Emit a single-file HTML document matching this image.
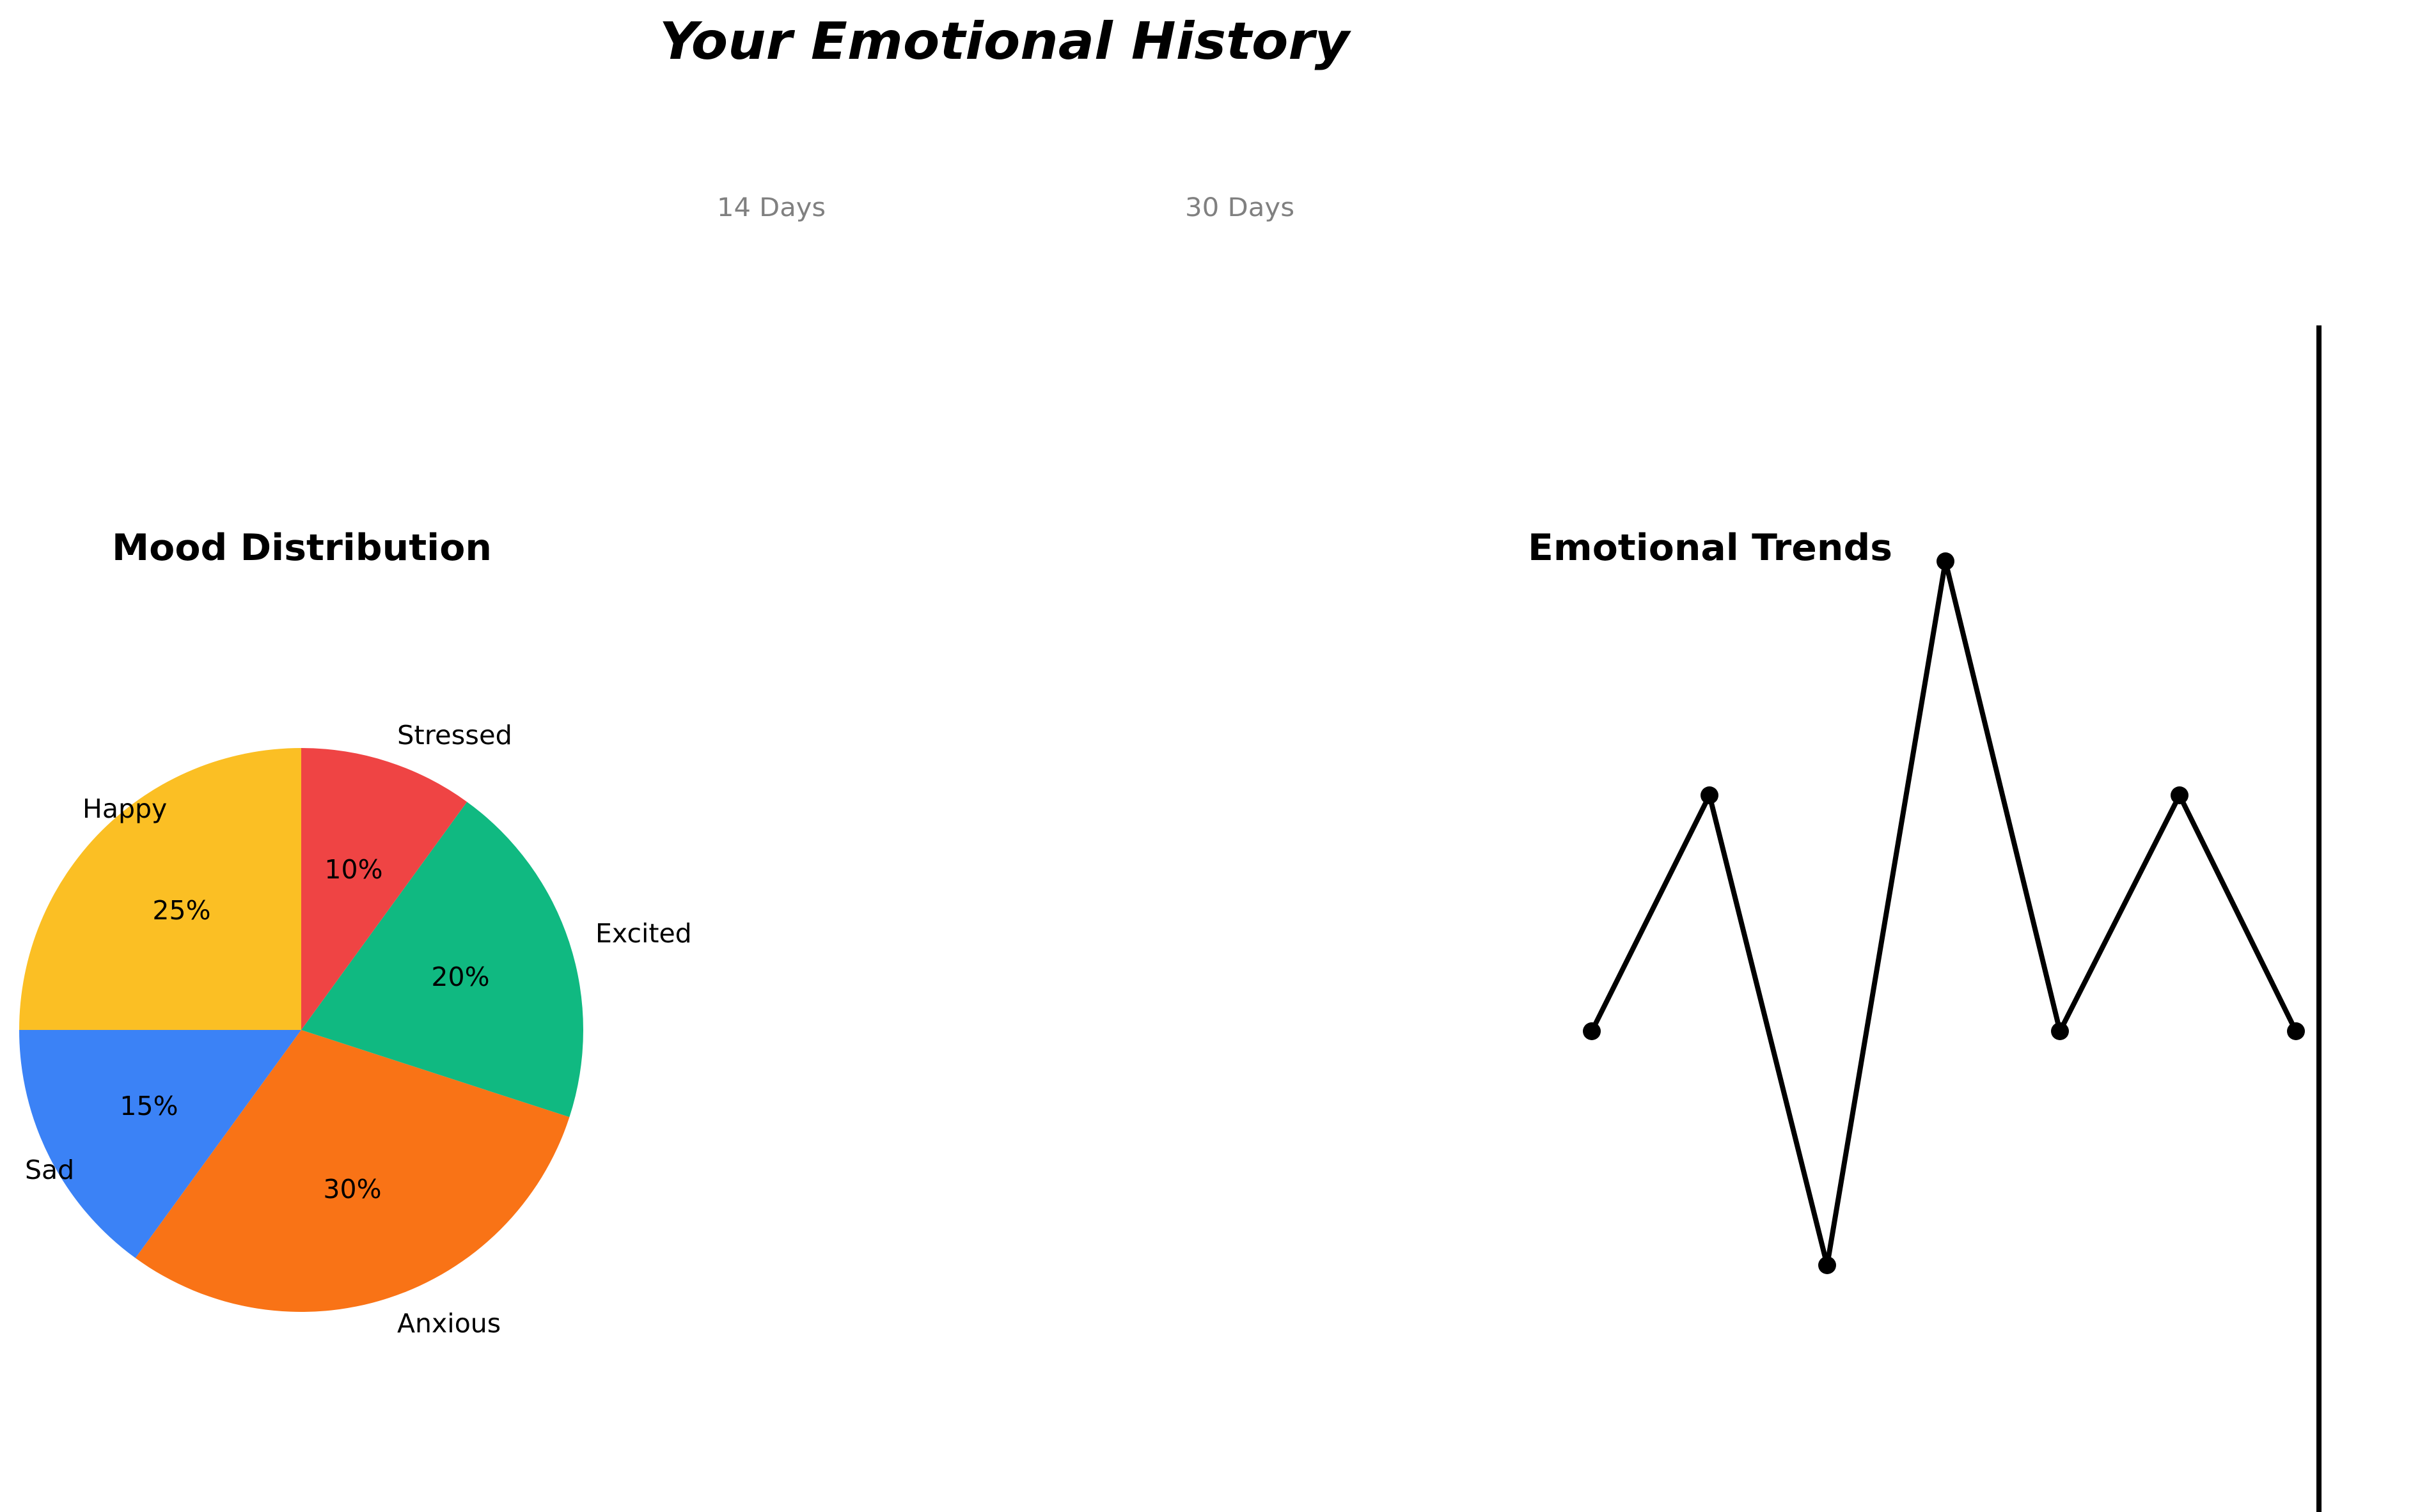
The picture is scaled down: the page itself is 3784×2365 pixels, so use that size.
<!DOCTYPE html>
<html><head><meta charset="utf-8"><style>
html,body{margin:0;padding:0;background:#fff;}
svg{display:block;}
text{font-family:"DejaVu Sans","Liberation Sans",sans-serif;}
</style></head><body>
<svg width="3784" height="2365" viewBox="0 0 3784 2365" xmlns="http://www.w3.org/2000/svg">
<rect width="3784" height="2365" fill="#fff"/>
<text x="1031" y="92" font-size="80" font-weight="bold" font-style="italic" textLength="1079" lengthAdjust="spacingAndGlyphs">Your Emotional History</text>
<text x="1121" y="338" font-size="40" fill="#808080" textLength="170" lengthAdjust="spacingAndGlyphs">14 Days</text>
<text x="1853" y="338" font-size="40" fill="#808080" textLength="171" lengthAdjust="spacingAndGlyphs">30 Days</text>
<text x="175" y="876" font-size="57" font-weight="bold" textLength="594" lengthAdjust="spacingAndGlyphs">Mood Distribution</text>
<text x="2389" y="876" font-size="57" font-weight="bold" textLength="570" lengthAdjust="spacingAndGlyphs">Emotional Trends</text>
<path d="M471,1611 L471,1170 A441,441 0 0 0 30,1611 Z" fill="#FBBF24"/>
<path d="M471,1611 L30,1611 A441,441 0 0 0 211.8,1967.8 Z" fill="#3B82F6"/>
<path d="M471,1611 L211.8,1967.8 A441,441 0 0 0 890.4,1747.3 Z" fill="#F97316"/>
<path d="M471,1611 L890.4,1747.3 A441,441 0 0 0 730.2,1254.2 Z" fill="#10B981"/>
<path d="M471,1611 L730.2,1254.2 A441,441 0 0 0 471,1170 Z" fill="#EF4444"/>
<g font-size="41">
<text x="621" y="1164" textLength="180" lengthAdjust="spacingAndGlyphs">Stressed</text>
<text x="129" y="1279">Happy</text>
<text x="931" y="1474">Excited</text>
<text x="39" y="1844">Sad</text>
<text x="621" y="2084">Anxious</text>
<g text-anchor="middle">
<text x="553" y="1374">10%</text>
<text x="284" y="1438">25%</text>
<text x="720" y="1542">20%</text>
<text x="233" y="1744">15%</text>
<text x="551" y="1874">30%</text>
</g></g>
<polyline points="2489,1613 2673,1244 2857,1979 3042,878 3221,1613 3408,1244 3590,1613" fill="none" stroke="#000" stroke-width="8" stroke-linejoin="miter"/>
<g fill="#000">
<circle cx="2489" cy="1613" r="14"/><circle cx="2673" cy="1244" r="14"/><circle cx="2857" cy="1979" r="14"/>
<circle cx="3042" cy="878" r="14"/><circle cx="3221" cy="1613" r="14"/><circle cx="3408" cy="1244" r="14"/><circle cx="3590" cy="1613" r="14"/>
</g>
<rect x="3622" y="509" width="8" height="1856" fill="#000"/>
</svg>
</body></html>
